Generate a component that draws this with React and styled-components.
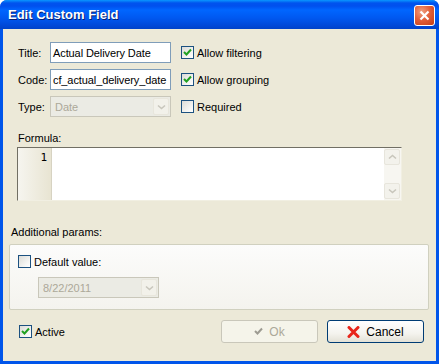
import React from "react";
import styled, { createGlobalStyle } from "styled-components";

const Global = createGlobalStyle`
  html, body { margin: 0; padding: 0; background: #fff; }
  body { font-family: "Liberation Sans", Arial, sans-serif; font-size: 11px; color: #000; }
`;

const Window = styled.div`
  width: 439px;
  height: 364px;
  display: flex;
  flex-direction: column;
  box-sizing: border-box;
  background: #0055ea;
  border-radius: 7px 7px 0 0;
  overflow: hidden;
`;

const TitleBar = styled.div`
  height: 29px;
  flex-shrink: 0;
  display: flex;
  align-items: center;
  justify-content: space-between;
  padding: 0 4px 0 8px;
  background: linear-gradient(
    to bottom,
    #0997ff 0px,
    #0053ee 3px,
    #0050ee 6px,
    #0066ff 10px,
    #0058f0 18px,
    #0047d6 26px,
    #0042c8 29px
  );
`;

const TitleText = styled.span`
  font-family: "Liberation Sans", Arial, sans-serif;
  font-weight: bold;
  font-size: 13px;
  color: #fff;
  text-shadow: 1px 1px 0 #0a1e6e;
`;

const CloseBtn = styled.div`
  width: 21px;
  height: 21px;
  box-sizing: border-box;
  border: 1px solid #fff;
  border-radius: 3px;
  background: radial-gradient(circle at 35% 30%, #f0a080 0%, #e2603b 45%, #c43c14 100%);
  display: flex;
  align-items: center;
  justify-content: center;
  margin-top: 2px;
`;

const Body = styled.div`
  flex: 1;
  margin: 0 3px 3px 3px;
  background: #ece9d8;
  display: flex;
  flex-direction: column;
  padding: 13px 0 0 0;
`;

const FormGrid = styled.div`
  display: grid;
  grid-template-columns: 22px 121px auto;
  grid-auto-rows: 21px;
  row-gap: 6px;
  column-gap: 10px;
  padding-left: 15px;
  align-items: center;
`;

const Label = styled.span`
  white-space: nowrap;
`;

const TextInput = styled.div`
  height: 21px;
  box-sizing: border-box;
  border: 1px solid #7f9db9;
  background: #fff;
  padding: 0 2px;
  display: flex;
  align-items: center;
  white-space: nowrap;
  overflow: hidden;
  font-size: 11px;
  letter-spacing: -0.1px;
`;

const Select = styled.div`
  height: 21px;
  width: ${p => p.width}px;
  box-sizing: border-box;
  border: 1px solid #c9c7ba;
  background: #ebebe4;
  color: #aca899;
  display: flex;
  align-items: center;
  justify-content: space-between;
  padding: 0 1px 0 4px;
`;

const DropBtn = styled.div`
  width: 16px;
  height: 17px;
  box-sizing: border-box;
  border: 1px solid #e8e6dc;
  border-radius: 2px;
  background: #f2f1ea;
  display: flex;
  align-items: center;
  justify-content: center;
`;

const CheckRow = styled.label`
  display: flex;
  align-items: center;
  gap: 3px;
  white-space: nowrap;
`;

const Box = styled.span`
  width: 13px;
  height: 13px;
  box-sizing: border-box;
  border: 1px solid #1c5180;
  background: linear-gradient(135deg, #dcdcd7 0%, #f6f6f4 70%, #fff 100%);
  display: inline-flex;
  align-items: center;
  justify-content: center;
  flex-shrink: 0;
`;

const SectionLabel = styled.div`
  padding-left: ${p => p.indent}px;
  margin-top: ${p => p.top}px;
  height: 13px;
  line-height: 13px;
`;

const Editor = styled.div`
  margin: 2px 0 0 14px;
  width: 385px;
  height: 54px;
  box-sizing: border-box;
  border: 1px solid;
  border-color: #716f64 #f1efe2 #f1efe2 #716f64;
  display: flex;
  background: #fff;
`;

const Gutter = styled.div`
  width: 34px;
  background: linear-gradient(to right, #f6f5ef 0%, #e8e4d2 100%);
  border-right: 1px solid #d7d3c2;
  font-family: "DejaVu Sans Mono", monospace;
  font-size: 11px;
  text-align: right;
  padding: 3px 4px 0 0;
  box-sizing: border-box;
`;

const Code = styled.div`
  flex: 1;
`;

const ScrollBar = styled.div`
  width: 17px;
  background: #f7f6f1;
  display: flex;
  flex-direction: column;
  justify-content: space-between;
  padding: 1px 0;
  box-sizing: border-box;
`;

const ScrollBtn = styled.div`
  width: 16px;
  height: 16px;
  box-sizing: border-box;
  border: 1px solid #e7e5dc;
  border-radius: 2px;
  background: #f3f2ec;
  display: flex;
  align-items: center;
  justify-content: center;
`;

const GroupBox = styled.div`
  margin: 5px 0 0 6px;
  width: 420px;
  height: 66px;
  box-sizing: border-box;
  border: 1px solid #d0d0bf;
  border-radius: 2px;
  background: linear-gradient(to bottom, #fcfcfb 0%, #f4f3ee 100%);
  padding: 10px 0 0 8px;
  display: flex;
  flex-direction: column;
  gap: 9px;
`;

const Indent = styled.div`
  padding-left: 20px;
`;

const Footer = styled.div`
  flex: 1;
  display: flex;
  align-items: center;
  padding: 0 12px 8px 16px;
`;

const Buttons = styled.div`
  margin-left: auto;
  display: flex;
  gap: 9px;
`;

const Button = styled.div`
  width: 97px;
  height: 23px;
  box-sizing: border-box;
  border: 1px solid ${p => (p.disabled ? "#c9c7ba" : "#003c74")};
  border-radius: 3px;
  background: ${p =>
    p.disabled ? "#f5f4ea" : "linear-gradient(to bottom, #ffffff 0%, #f4f3ee 60%, #e3e1d6 100%)"};
  color: ${p => (p.disabled ? "#aca899" : "#000")};
  display: flex;
  align-items: center;
  justify-content: center;
  gap: 6px;
  font-size: 12px;
`;

const Tick = ({ color = "#21a121" }) => (
  <svg width="9" height="9" viewBox="0 0 9 9">
    <path d="M1 4 L3.5 6.5 L8 1.5" stroke={color} strokeWidth="2" fill="none" />
  </svg>
);

const Check = ({ checked, children }) => (
  <CheckRow>
    <Box>{checked && <Tick />}</Box>
    {children}
  </CheckRow>
);

const Chevron = ({ dir = "down" }) => (
  <svg width="9" height="6" viewBox="0 0 9 6">
    <path
      d={dir === "down" ? "M1 1.5 L4.5 4.5 L8 1.5" : "M1 4.5 L4.5 1.5 L8 4.5"}
      stroke="#c8c6bc"
      strokeWidth="1.6"
      fill="none"
    />
  </svg>
);

export default function App() {
  return (
    <>
      <Global />
      <Window>
        <TitleBar>
          <TitleText>Edit Custom Field</TitleText>
          <CloseBtn>
            <svg width="11" height="11" viewBox="0 0 11 11">
              <path d="M1.5 1.5 L9.5 9.5 M9.5 1.5 L1.5 9.5" stroke="#fff" strokeWidth="2.2" />
            </svg>
          </CloseBtn>
        </TitleBar>
        <Body>
          <FormGrid>
            <Label>Title:</Label>
            <TextInput>Actual Delivery Date</TextInput>
            <Check checked>Allow filtering</Check>
            <Label>Code:</Label>
            <TextInput>cf_actual_delivery_date</TextInput>
            <Check checked>Allow grouping</Check>
            <Label>Type:</Label>
            <Select width={121}>
              Date
              <DropBtn><Chevron /></DropBtn>
            </Select>
            <Check>Required</Check>
          </FormGrid>
          <SectionLabel indent={15} top={15}>Formula:</SectionLabel>
          <Editor>
            <Gutter>1</Gutter>
            <Code />
            <ScrollBar>
              <ScrollBtn><Chevron dir="up" /></ScrollBtn>
              <ScrollBtn><Chevron /></ScrollBtn>
            </ScrollBar>
          </Editor>
          <SectionLabel indent={8} top={25}>Additional params:</SectionLabel>
          <GroupBox>
            <Check>Default value:</Check>
            <Indent>
              <Select width={121}>
                8/22/2011
                <DropBtn><Chevron /></DropBtn>
              </Select>
            </Indent>
          </GroupBox>
          <Footer>
            <Check checked>Active</Check>
            <Buttons>
              <Button disabled>
                <Tick color="#9d9b92" />
                Ok
              </Button>
              <Button>
                <svg width="13" height="12" viewBox="0 0 13 12">
                  <path d="M2 1.5 L11 10.5 M11 1.5 L2 10.5" stroke="#e8251b" strokeWidth="3" strokeLinecap="round" />
                </svg>
                Cancel
              </Button>
            </Buttons>
          </Footer>
        </Body>
      </Window>
    </>
  );
}
